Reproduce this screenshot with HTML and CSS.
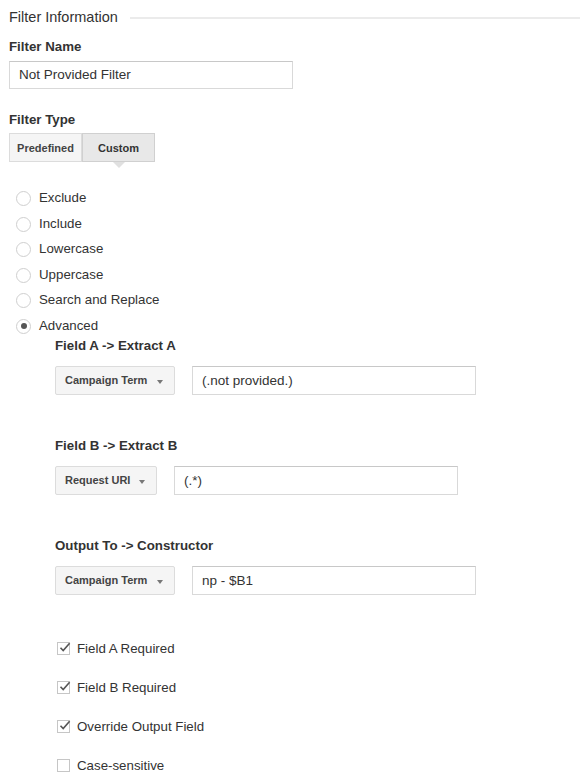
FILE: index.html
```html
<!DOCTYPE html>
<html>
<head>
<meta charset="utf-8">
<link rel="stylesheet" href="styles.css">
</head>
<body>
<div class="legend"><span class="legend-text">Filter Information</span><span class="legend-line"></span></div>

<div class="label label-name">Filter Name</div>
<div class="input input-name">Not Provided Filter</div>

<div class="label label-type">Filter Type</div>
<div class="tabs">
  <div class="tab">Predefined</div>
  <div class="tab tab-active">Custom</div>
</div>

<div class="radios">
  <div class="radio-row"><span class="radio"></span><span>Exclude</span></div>
  <div class="radio-row"><span class="radio"></span><span>Include</span></div>
  <div class="radio-row"><span class="radio"></span><span>Lowercase</span></div>
  <div class="radio-row"><span class="radio"></span><span>Uppercase</span></div>
  <div class="radio-row"><span class="radio"></span><span>Search and Replace</span></div>
  <div class="radio-row"><span class="radio radio-on"></span><span>Advanced</span></div>
</div>

<div class="advanced">
  <div class="label">Field A -&gt; Extract A</div>
  <div class="field-row">
    <div class="select select-wide">Campaign Term<span class="arrow"></span></div>
    <div class="input input-field">(.not provided.)</div>
  </div>

  <div class="label label-gap">Field B -&gt; Extract B</div>
  <div class="field-row">
    <div class="select select-narrow">Request URI<span class="arrow"></span></div>
    <div class="input input-field">(.*)</div>
  </div>

  <div class="label label-gap">Output To -&gt; Constructor</div>
  <div class="field-row">
    <div class="select select-wide">Campaign Term<span class="arrow"></span></div>
    <div class="input input-field">np - $B1</div>
  </div>

  <div class="checks">
    <div class="check-row"><span class="check check-on"><svg width="13" height="13" viewBox="0 0 13 13"><path d="M2.5 6.8 L5.2 9.6 L11.6 2.2" fill="none" stroke="#555" stroke-width="1.6"/></svg></span><span>Field A Required</span></div>
    <div class="check-row"><span class="check check-on"><svg width="13" height="13" viewBox="0 0 13 13"><path d="M2.5 6.8 L5.2 9.6 L11.6 2.2" fill="none" stroke="#555" stroke-width="1.6"/></svg></span><span>Field B Required</span></div>
    <div class="check-row"><span class="check check-on"><svg width="13" height="13" viewBox="0 0 13 13"><path d="M2.5 6.8 L5.2 9.6 L11.6 2.2" fill="none" stroke="#555" stroke-width="1.6"/></svg></span><span>Override Output Field</span></div>
    <div class="check-row"><span class="check"></span><span>Case-sensitive</span></div>
  </div>
</div>
</body>
</html>
```

FILE: styles.css
```css
html, body {
  margin: 0;
  background: #fff;
}
body {
  padding: 8px 0 0 9px;
  font-family: "Liberation Sans", Arial, sans-serif;
  color: #333;
  font-size: 13px;
}
.legend {
  display: flex;
  align-items: center;
  height: 18px;
}
.legend-text {
  font-size: 14.5px;
  color: #333;
  line-height: 18px;
}
.legend-line {
  flex: 1;
  height: 2px;
  background: #ebebeb;
  margin-left: 12px;
  margin-top: 2px;
}
.label {
  font-weight: bold;
  font-size: 13.3px;
  line-height: 16px;
  color: #333;
}
.label-name {
  margin-top: 13px;
}
.input {
  box-sizing: border-box;
  height: 28px;
  border: 1px solid #d9d9d9;
  border-top-color: #c8c8c8;
  font-size: 13.5px;
  line-height: 26px;
  padding-left: 9px;
  color: #333;
  background: #fff;
}
.input-name {
  margin-top: 6px;
  width: 284px;
}
.label-type {
  margin-top: 23px;
}
.tabs {
  display: flex;
  margin-top: 5px;
}
.tab {
  position: relative;
  box-sizing: border-box;
  width: 73px;
  height: 29px;
  line-height: 28px;
  text-align: center;
  font-size: 11px;
  font-weight: bold;
  color: #444;
  background: #f5f5f5;
  border: 1px solid #dcdcdc;
}
.tab + .tab {
  border-left: 1px solid #d0d0d0;
}
.tab-active {
  background: #e8e8e8;
  border-color: #d0d0d0;
  color: #333;
}
.tab-active::after {
  content: "";
  position: absolute;
  left: 50%;
  bottom: -7px;
  margin-left: -6px;
  width: 0;
  height: 0;
  border-left: 6px solid transparent;
  border-right: 6px solid transparent;
  border-top: 6px solid #e0e0e0;
}
.radios {
  margin-top: 23px;
}
.radio-row {
  display: flex;
  align-items: center;
  height: 25.5px;
  font-size: 13.3px;
  color: #333;
}
.radio {
  box-sizing: border-box;
  width: 15px;
  height: 15px;
  border-radius: 50%;
  border: 1px solid #cfcfcf;
  margin-left: 7px;
  margin-right: 8px;
  margin-top: 2px;
  position: relative;
  background: #fff;
}
.radio-on::after {
  content: "";
  position: absolute;
  left: 3.5px;
  top: 3.5px;
  width: 6px;
  height: 6px;
  border-radius: 50%;
  background: #555;
}
.advanced {
  margin-left: 46px;
}
.field-row {
  display: flex;
  gap: 17px;
  margin-top: 12px;
}
.label-gap {
  margin-top: 43px;
}
.select {
  box-sizing: border-box;
  height: 29px;
  line-height: 27px;
  font-size: 11px;
  font-weight: bold;
  color: #444;
  background: #f5f5f5;
  border: 1px solid #dcdcdc;
  border-radius: 2px;
  padding-left: 9px;
  position: relative;
}
.select-wide {
  width: 120px;
}
.select-narrow {
  width: 102px;
}
.arrow {
  position: absolute;
  right: 11px;
  top: 13px;
  width: 0;
  height: 0;
  border-left: 3.5px solid transparent;
  border-right: 3.5px solid transparent;
  border-top: 4px solid #777;
}
.input-field {
  width: 284px;
  height: 29px;
  line-height: 27px;
}
.checks {
  margin-top: 43px;
  display: flex;
  flex-direction: column;
  gap: 19px;
}
.check-row {
  display: flex;
  align-items: center;
  height: 20px;
  font-size: 13.3px;
  color: #333;
}
.check {
  box-sizing: border-box;
  width: 13px;
  height: 13px;
  border: 1px solid #c6c6c6;
  margin-left: 2px;
  margin-right: 7px;
  position: relative;
  background: #fff;
}
.check svg {
  position: absolute;
  left: 0px;
  top: -2px;
}
```
